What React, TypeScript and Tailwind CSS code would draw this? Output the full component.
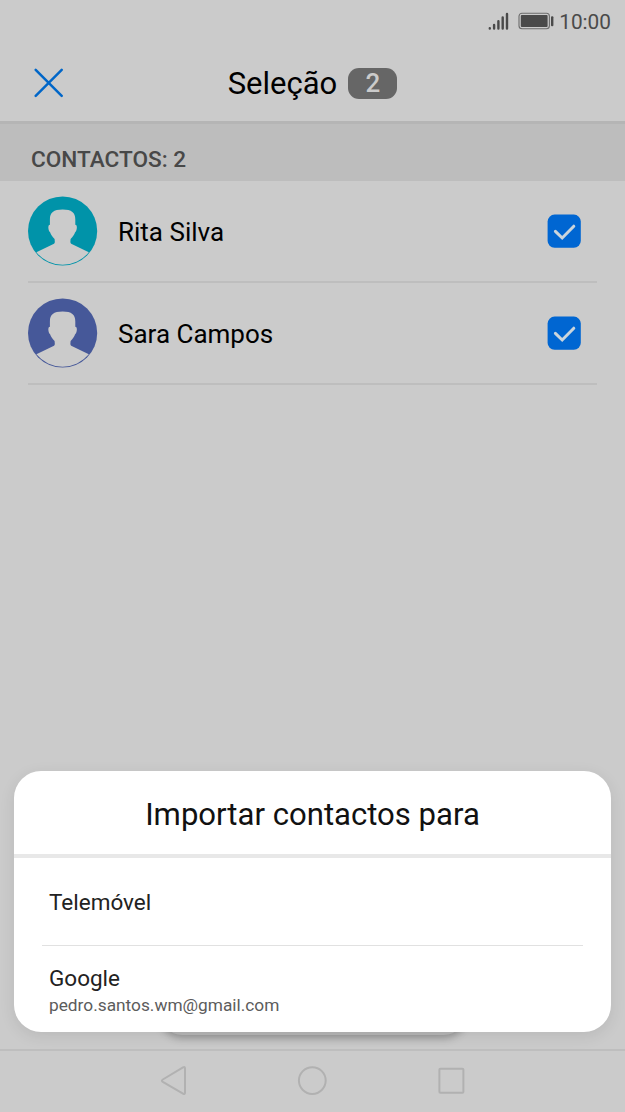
type Contact = {
  name: string;
  color: string;
};

const contacts: Contact[] = [
  { name: "Rita Silva", color: "#0093a9" },
  { name: "Sara Campos", color: "#465899" },
];

function StatusBar() {
  return (
    <div className="flex h-11 items-center justify-end pr-3.5 text-[#4a4a4a]">
      <svg className="-mt-1" width="22" height="20" viewBox="0 0 22 20" fill="none" stroke="currentColor" strokeWidth="2.4" strokeLinecap="round">
        <path d="M2.8 18.3v.2M7.1 15v3.5M11.4 11.2v7.3M15.7 7.4v11.1M20 4v14.5" />
      </svg>
      <svg className="-mt-0.5 ml-[9px]" width="36" height="18" viewBox="0 0 36 18" fill="none">
        <rect x="1" y="1.2" width="30.4" height="15.6" rx="3" stroke="#6c6c6c" strokeWidth="1.1" />
        <rect x="2.8" y="3" width="26.8" height="12" rx="1" fill="currentColor" />
        <rect x="33" y="4.2" width="2.4" height="10" rx="1" fill="currentColor" />
      </svg>
      <span className="ml-[5px] text-[20.8px] leading-none">10:00</span>
    </div>
  );
}

function Header() {
  return (
    <header className="grid h-[77px] grid-cols-[97px_1fr_97px] items-center">
      <button className="flex justify-center" aria-label="Fechar">
        <svg className="mt-px size-[30px]" viewBox="0 0 30 30" fill="none" stroke="#0066c8" strokeWidth="2.5" strokeLinecap="round">
          <path d="M1.7 1.8l26 26M27.7 1.8l-26 26" />
        </svg>
      </button>
      <div className="flex items-center justify-center">
        <h1 className="mt-0.5 text-[31px] leading-none text-black">Seleção</h1>
        <span className="mt-px ml-[11px] flex h-[31px] w-[49px] items-center justify-center rounded-[11px] bg-[#666] text-[26px] leading-none font-medium text-[#cbcbcb]">
          2
        </span>
      </div>
    </header>
  );
}

function Avatar({ color }: { color: string }) {
  return (
    <svg className="size-[70px]" viewBox="0 0 70 70">
      <circle cx="34.6" cy="35" r="34.6" fill={color} />
      <path
        d="M8.4 56.3L26 47.7Q26.9 47.2 26.8 45.6L26.6 43C24.2 40.5 22.8 38.8 22.2 36.6C20.3 34.7 19.9 31 20.8 29.2L21.9 28.8V23.5C21.9 16.5 25.5 13.5 34.6 13.5S47.3 16.5 47.3 23.5V28.8L48.4 29.2C49.3 31 48.9 34.7 47 36.6C46.4 38.8 45 40.5 42.6 43L42.4 45.6Q42.3 47.2 43.2 47.7L60.8 56.3A33.8 33.8 0 0 1 8.4 56.3Z"
        fill="#cbcbcb"
      />
    </svg>
  );
}

function ContactRow({ name, color }: Contact) {
  return (
    <li className="mx-7 flex h-[102px] items-center border-b-2 border-[#bebebe]">
      <Avatar color={color} />
      <span className="mt-0.5 ml-5 flex-1 text-[26px] leading-none text-black">{name}</span>
      <svg className="mr-4 size-[34px]" viewBox="0 0 34 34" fill="none">
        <rect x=".6" y=".6" width="33.2" height="33.2" rx="7" fill="#0066d2" />
        <path d="M8.4 17.4L15.2 24L26.8 12.2" stroke="#cbd5dc" strokeWidth="3" strokeLinecap="round" />
      </svg>
    </li>
  );
}

function NavBar() {
  return (
    <nav className="h-[63px] border-t-2 border-[#bebebe]">
      <svg width="625" height="61" viewBox="0 0 625 61" fill="none" stroke="#b1b1b1" strokeWidth="2">
        <path d="M162.8 28.5L183 16.4Q185 15.2 185 17.5V41.5Q185 43.8 183 42.6L162.8 30.8Q161 29.6 162.8 28.5Z" />
        <circle cx="312.3" cy="29.6" r="13.4" />
        <rect x="439.4" y="17.8" width="24" height="24" rx="1" />
      </svg>
    </nav>
  );
}

function ImportSheet() {
  return (
    <section className="absolute top-[771px] right-3.5 left-3.5 h-[261px] rounded-[27px] bg-white shadow-[0_4px_16px_rgba(0,0,0,0.09)]">
      <h2 className="flex h-[87px] items-center justify-center border-b-4 border-[#e8e8e8] pt-1 text-[31.1px] leading-none text-[#111]">
        Importar contactos para
      </h2>
      <button className="mx-7 flex h-[88px] w-[541px] items-center border-b border-[#e1e1e1] pt-0.5 pl-[7px] text-[22.5px] leading-none text-[#222]">
        Telemóvel
      </button>
      <button className="mx-7 flex flex-col items-start pt-[21px] pl-[7px]">
        <span className="text-[22.5px] leading-none text-[#222]">Google</span>
        <span className="mt-[7px] text-[17.3px] leading-none text-[#5c5c5c]">pedro.santos.wm@gmail.com</span>
      </button>
    </section>
  );
}

export default function App() {
  return (
    <div className="relative flex h-[1112px] w-[625px] flex-col overflow-hidden bg-[#cbcbcb] font-['Roboto',sans-serif]">
      <StatusBar />
      <Header />
      <div className="flex h-[60px] items-end border-t-[3px] border-[#b5b5b5] bg-[#bdbdbd] pb-[9px] pl-[31px] text-[22.6px] leading-none font-medium text-[#484848]">
        CONTACTOS: 2
      </div>
      <ul>
        {contacts.map((contact) => (
          <ContactRow key={contact.name} {...contact} />
        ))}
      </ul>
      {/* Barra inferior, quase toda tapada pelo painel */}
      <div className="mx-auto mt-auto mb-[14px] h-14 w-[306px] rounded-[22px] bg-[#b8b8b8] shadow-[0_3px_8px_rgba(0,0,0,0.28)]" />
      <NavBar />
      <ImportSheet />
    </div>
  );
}
